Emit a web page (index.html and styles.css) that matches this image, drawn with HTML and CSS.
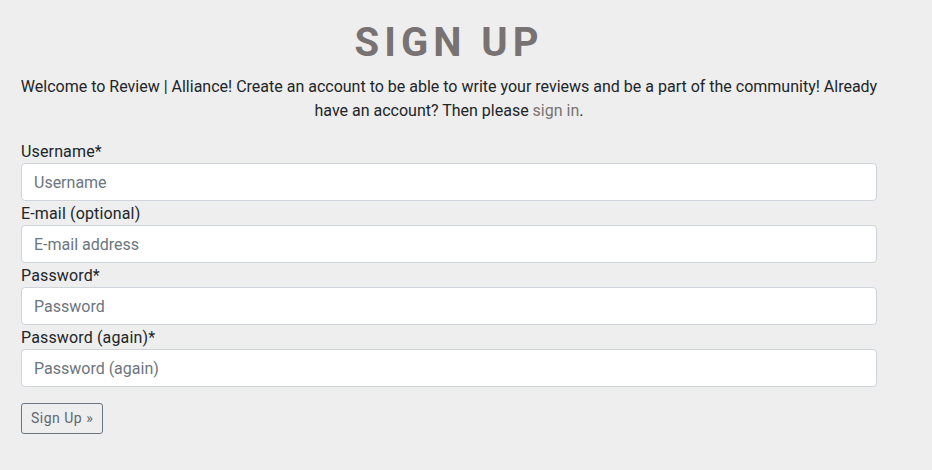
FILE: index.html
```html
<!DOCTYPE html>
<html lang="en">
<head>
<meta charset="utf-8">
<title>Sign Up</title>
<link rel="stylesheet" href="styles.css">
</head>
<body>
<main class="page">
  <h1 class="title">Sign Up</h1>
  <p class="intro">Welcome to Review | Alliance! Create an account to be able to write your reviews and be a part of the community! Already have an account? Then please <a class="link" href="#">sign in</a>.</p>
  <form class="form">
    <div class="field">
      <label class="label" for="u">Username*</label>
      <input class="input" id="u" type="text" placeholder="Username">
    </div>
    <div class="field">
      <label class="label" for="e">E-mail (optional)</label>
      <input class="input" id="e" type="email" placeholder="E-mail address">
    </div>
    <div class="field">
      <label class="label" for="p1">Password*</label>
      <input class="input" id="p1" type="password" placeholder="Password">
    </div>
    <div class="field">
      <label class="label" for="p2">Password (again)*</label>
      <input class="input" id="p2" type="password" placeholder="Password (again)">
    </div>
    <div class="actions">
      <button class="btn" type="button">Sign Up &raquo;</button>
    </div>
  </form>
</main>
</body>
</html>
```
FILE: styles.css
```css
* { box-sizing: border-box; }
html, body {
  margin: 0;
  padding: 0;
  background: #eeeeee;
}
body {
  font-family: Roboto, "Helvetica Neue", Arial, sans-serif;
  font-size: 16px;
  line-height: 1.5;
  color: #212529;
}
.page {
  width: 856px;
  margin-left: 21px;
  padding-top: 19px;
}
.title {
  margin: 0 0 8px;
  text-align: center;
  text-transform: uppercase;
  font-size: 40px;
  line-height: 1.2;
  font-weight: 700;
  letter-spacing: 5px;
  color: #787372;
}
.intro {
  margin: 0 -8px 16px;
  text-align: center;
}
.link {
  color: #787372;
  text-decoration: none;
}
.form {
  display: flex;
  flex-direction: column;
}
.field {
  display: flex;
  flex-direction: column;
}
.label {
  display: block;
  height: 24px;
  padding-top: 1px;
  line-height: 24px;
  letter-spacing: 0.15px;
}
.input {
  display: block;
  width: 100%;
  height: 38px;
  padding: 6px 12px;
  font-family: inherit;
  font-size: 16px;
  line-height: 1.5;
  color: #495057;
  background: #fff;
  border: 1px solid #ced4da;
  border-radius: 4px;
}
.input::placeholder {
  color: #6c757d;
  opacity: 1;
}
.actions {
  margin-top: 16px;
}
.btn {
  font-family: inherit;
  font-size: 14px;
  line-height: 1.5;
  padding: 4px 9px;
  height: 31px;
  letter-spacing: 0.5px;
  color: #5f676e;
  background: transparent;
  border: 1px solid #6c757d;
  border-radius: 3px;
}
```
